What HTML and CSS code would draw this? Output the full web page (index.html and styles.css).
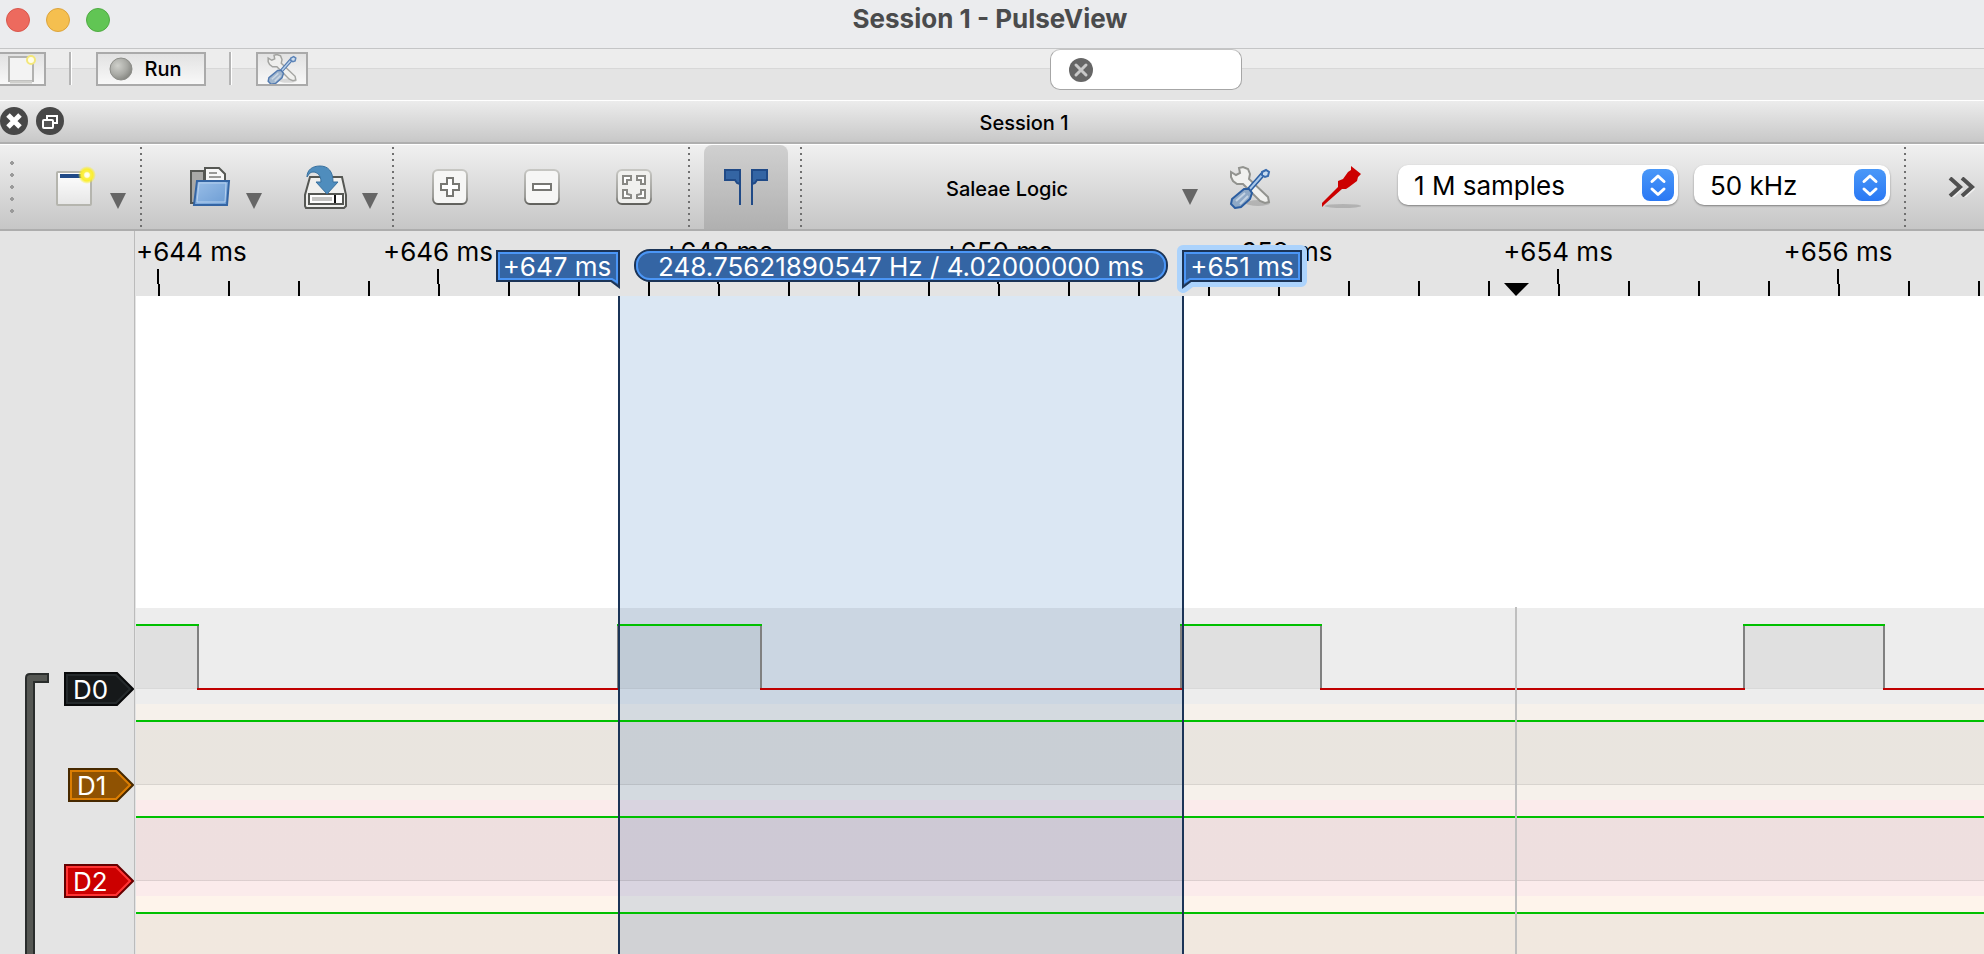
FILE: index.html
```html
<!DOCTYPE html>
<html lang="en">
<head>
<meta charset="utf-8">
<title>Session 1 - PulseView</title>
<link rel="stylesheet" href="styles.css">
</head>
<body>
<svg class="defs" aria-hidden="true">
  <defs>
    <linearGradient id="paper" x1="0" y1="0" x2="0" y2="1"><stop offset="0" stop-color="#fff"/><stop offset="1" stop-color="#e6e6e6"/></linearGradient>
    <linearGradient id="folder" x1="0" y1="0" x2="1" y2="1"><stop offset="0" stop-color="#9bbfe8"/><stop offset="1" stop-color="#6a9bd3"/></linearGradient>
    <linearGradient id="rim" x1="0" y1="0" x2="0" y2="1"><stop offset="0" stop-color="#c6c6c2"/><stop offset="0.8" stop-color="#9a9a96"/><stop offset="1" stop-color="#60605c"/></linearGradient>
    <radialGradient id="ball" cx="0.35" cy="0.35" r="0.7"><stop offset="0" stop-color="#cfd0cb"/><stop offset="0.6" stop-color="#a9aaa5"/><stop offset="1" stop-color="#858681"/></radialGradient>
    <radialGradient id="glow"><stop offset="0" stop-color="#fff"/><stop offset="0.25" stop-color="#fffde0"/><stop offset="0.4" stop-color="#fbf04a"/><stop offset="0.65" stop-color="#fbee30"/><stop offset="1" stop-color="#fbee20" stop-opacity="0"/></radialGradient>
    <symbol id="tools" viewBox="0 0 44 44">
      <ellipse cx="30" cy="38" rx="12" ry="3" fill="#000" opacity="0.15"/>
      <path d="M3 12V7L8 10L12 8L11 3L15 2L20 4L22 9L21 14L40 32L41 37L37 38L32 36L15 19L9 19L5 16Z" fill="#f1f1ef" stroke="#92938f" stroke-width="2"/>
      <path d="M35 9L20 26" stroke="#2b5da0" stroke-width="5"/>
      <path d="M35 9L20 26" stroke="#a9c8ea" stroke-width="2"/>
      <path d="M34 7L38 5L41 7L40 11L37 12L34 10Z" fill="#c9dcf0" stroke="#3a6cae" stroke-width="2"/>
      <path d="M16 24L21 24L24 28L22 34L13 42L7 43L3 39L4 34Z" fill="#8fa9c6" stroke="#2b5da0" stroke-width="2"/>
      <path d="M8 36L17 28M12 39L20 31" stroke="#c3d2e2" stroke-width="2"/>
    </symbol>
    <symbol id="updown" viewBox="0 0 32 32">
      <path d="M10 12.500L16 7L22 12.500M10 20L16 25.500L22 20" fill="none" stroke="#fff" stroke-width="3" stroke-linecap="round" stroke-linejoin="round"/>
    </symbol>
    <symbol id="caret" viewBox="0 0 16 16"><path d="M0 0H16L8 16Z" fill="#666"/></symbol>
  </defs>
</svg>

<header class="titlebar">
  <div class="lights">
    <button class="light close" aria-label="Close"></button>
    <button class="light minimise" aria-label="Minimise"></button>
    <button class="light zoom" aria-label="Zoom"></button>
  </div>
  <h1 class="window-title">Session 1 - PulseView</h1>
</header>

<div class="runbar">
  <button class="push push-new" aria-label="New session">
    <svg width="30" height="30" viewBox="0 0 30 30"><rect x="2" y="3" width="24" height="24" fill="#f3f3f3" stroke="#b2b2b0" stroke-width="2"/><path d="M3 28H25" stroke="#cfcfcc" stroke-width="3"/><circle cx="24" cy="6" r="4" fill="#fffde8" stroke="#f3e77a" stroke-width="2"/></svg>
  </button>
  <span class="bar-line"></span>
  <button class="push push-run">
    <svg width="26" height="26" viewBox="0 0 26 26"><circle cx="13" cy="13" r="11" fill="url(#ball)" stroke="#8d8e89"/></svg>
    Run
  </button>
  <span class="bar-line"></span>
  <button class="push push-tools" aria-label="Settings"><svg width="32" height="32" opacity="0.8"><use href="#tools"/></svg></button>
  <label class="search">
    <svg width="24" height="24" viewBox="0 0 24 24"><circle cx="12" cy="12" r="12" fill="#666"/><path d="M7 7L17 17M17 7L7 17" stroke="#c8c8c8" stroke-width="3" stroke-linecap="round"/></svg>
    <input type="text" aria-label="Search">
  </label>
</div>

<div class="dock-title">
  <button class="dock-button" aria-label="Close session"><svg width="28" height="28" viewBox="0 0 28 28"><circle cx="14" cy="14" r="14" fill="#484848"/><path d="M8 8L20 20M20 8L8 20" stroke="#fff" stroke-width="5"/></svg></button>
  <button class="dock-button" aria-label="Float session"><svg width="28" height="28" viewBox="0 0 28 28"><circle cx="14" cy="14" r="14" fill="#484848"/><path d="M11 12V9H21V16H18" fill="none" stroke="#fff" stroke-width="2"/><rect x="7" y="13" width="10" height="8" rx="1" fill="#555" stroke="#fff" stroke-width="2"/></svg></button>
  <h2 class="dock-name">Session 1</h2>
</div>

<div class="toolbar">
  <span class="grip"></span>
  <button class="tool" aria-label="New view">
    <svg width="44" height="44" viewBox="0 0 44 44"><rect x="5" y="7" width="34" height="33" rx="1" fill="url(#paper)" stroke="#b5b5ae" stroke-width="2"/><rect x="8" y="9" width="28" height="4" fill="#204a87"/><circle cx="35" cy="10" r="9" fill="url(#glow)"/></svg>
    <svg class="caret" width="16" height="16"><use href="#caret"/></svg>
  </button>
  <span class="dots after-menu"></span>
  <button class="tool open" aria-label="Open">
    <svg width="44" height="44" viewBox="0 0 44 44"><path d="M3 6H16V38H3Z" fill="#a9a9a7" stroke="#555753" stroke-width="2"/><path d="M17 3H31L37 9V24H17Z" fill="#f8f8f8" stroke="#555753" stroke-width="2"/><path d="M21 8H29M21 12H33" stroke="#9a9a98" stroke-width="2"/><path d="M9 16H41L39 40H6Z" fill="url(#folder)" stroke="#3465a4" stroke-width="2"/><path d="M11 18H38L37 37H9Z" fill="none" stroke="#b5d0ee"/></svg>
    <svg class="caret" width="16" height="16"><use href="#caret"/></svg>
  </button>
  <button class="tool save" aria-label="Save">
    <svg width="44" height="44" viewBox="0 0 44 44"><path d="M6 12H38L42 30V41L40 43H2L1 41V30Z" fill="#f0f0ee" stroke="#555753" stroke-width="2"/><rect x="5" y="29" width="34" height="10" fill="#fff" stroke="#555753" stroke-width="2"/><path d="M8 34H28" stroke="#c4c4c2" stroke-width="4"/><path d="M31 30V38" stroke="#111" stroke-width="2"/><path d="M3 12C3 5 8 1 16 1C24 1 29 6 29 17H34L23 29L12 17H17C17 10 13 7 9 7C6 7 5 9 3 12Z" fill="#4f8dbd" stroke="#38709e"/></svg>
    <svg class="caret" width="16" height="16"><use href="#caret"/></svg>
  </button>
  <span class="dots after-menu"></span>
  <div class="zooms">
    <button class="tool" aria-label="Zoom in"><svg width="36" height="36" viewBox="0 0 36 36"><rect x="1" y="1" width="34" height="34" rx="5" fill="#f6f6f5" stroke="url(#rim)" stroke-width="2"/><path d="M15 9H21V15H27V21H21V27H15V21H9V15H15Z" fill="#fff" stroke="#777773" stroke-width="2"/></svg></button>
    <button class="tool" aria-label="Zoom out"><svg width="36" height="36" viewBox="0 0 36 36"><rect x="1" y="1" width="34" height="34" rx="5" fill="#f6f6f5" stroke="url(#rim)" stroke-width="2"/><path d="M9 15H27V21H9Z" fill="#fff" stroke="#777773" stroke-width="2"/></svg></button>
    <button class="tool" aria-label="Zoom to fit"><svg width="36" height="36" viewBox="0 0 36 36"><rect x="1" y="1" width="34" height="34" rx="5" fill="#f0f0ee" stroke="url(#rim)" stroke-width="2"/><path d="M7 7H15V11H11V15H7ZM21 7H29V15H25V11H21ZM7 21H11V25L15 26V29H7ZM29 21H25V25L21 26V29H29Z" fill="#fff" stroke="#888884" stroke-width="2"/></svg></button>
  </div>
  <span class="dots"></span>
  <button class="tool cursors" aria-label="Show cursors" aria-pressed="true"><svg width="44" height="36" viewBox="0 0 44 36"><path d="M16 0V36M28 0V36" stroke="#204a87" stroke-width="2"/><path d="M1 1H16V15L13 14L11 11H1ZM43 1H28V15L31 14L33 11H43Z" fill="#3465a4" stroke="#204a87" stroke-width="2"/></svg></button>
  <span class="dots"></span>
  <button class="tool device"><span class="device-name">Saleae Logic</span><svg class="caret" width="16" height="16"><use href="#caret"/></svg></button>
  <button class="tool configure" aria-label="Configure device"><svg width="44" height="44"><use href="#tools"/></svg></button>
  <button class="tool probe" aria-label="Configure channels"><svg width="44" height="44" viewBox="0 0 44 44"><ellipse cx="23" cy="41" rx="18" ry="2" fill="#000" opacity="0.15"/><path d="M2 42V38L18 22V16L23 14L28 7L31 5V1L41 9L38 12L37 16L29 22L26 24H22L5 39Z" fill="#c00"/></svg></button>
  <label class="picker samples"><select aria-label="Sample count"><option>1 M samples</option></select><svg class="picker-arrows" width="32" height="32"><use href="#updown"/></svg></label>
  <label class="picker rate"><select aria-label="Sample rate"><option>50 kHz</option></select><svg class="picker-arrows" width="32" height="32"><use href="#updown"/></svg></label>
  <span class="dots"></span>
  <button class="tool more" aria-label="More"><svg width="28" height="20" viewBox="0 0 28 20"><path d="M2 1L12 10L2 19M14 1L24 10L14 19" fill="none" stroke="#fff" stroke-width="3" transform="translate(1 2)" opacity="0.6"/><path d="M2 1L12 10L2 19M14 1L24 10L14 19" fill="none" stroke="#505050" stroke-width="4"/></svg></button>
</div>

<main class="session">
  <aside class="channels">
    <svg class="bracket" width="24" height="320" viewBox="0 0 24 320"><path d="M1 322V5Q1 1 5 1H23V9H9V322" fill="#555753" stroke="#2a2d2c" stroke-width="2"/></svg>
    <div class="tags">
      <svg width="70" height="34" viewBox="0 0 70 34"><path d="M1 1H53L69 17L53 33H1Z" fill="#16191a" stroke="#08090a" stroke-width="2"/><path d="M3 3H52L66 17L52 31H3Z" fill="none" stroke="#24292b" stroke-width="2"/><text class="tag-text" x="9" y="27">D0</text></svg>
      <svg width="66" height="34" viewBox="0 0 66 34"><path d="M1 1H49L65 17L49 33H1Z" fill="#8f5202" stroke="#472900" stroke-width="2"/><path d="M3 3H48L62 17L48 31H3Z" fill="none" stroke="#db7d03" stroke-width="2"/><text class="tag-text" x="9" y="27">D1</text></svg>
      <svg width="70" height="34" viewBox="0 0 70 34"><path d="M1 1H53L69 17L53 33H1Z" fill="#c00" stroke="#600" stroke-width="2"/><path d="M3 3H52L66 17L52 31H3Z" fill="none" stroke="#ff3434" stroke-width="2"/><text class="tag-text" x="9" y="27">D2</text></svg>
    </div>
  </aside>

  <section class="view">
    <svg class="ruler" width="100%" height="65">
      <path stroke="#000" stroke-width="2" d="M22 38v15M302 38v15M582 38v15M862 38v15M1142 38v15M1422 38v15M1702 38v15M23 53v12M93 50v15M163 50v15M233 50v15M303 53v12M373 50v15M443 50v15M513 50v15M583 53v12M653 50v15M723 50v15M793 50v15M863 53v12M933 50v15M1003 50v15M1073 50v15M1143 53v12M1213 50v15M1283 50v15M1353 50v15M1423 53v12M1493 50v15M1563 50v15M1633 50v15M1703 53v12M1773 50v15M1843 50v15"/>
      <g class="ruler-text">
        <text class="first" x="0" y="30">+644 ms</text>
        <text x="302" y="30">+646 ms</text>
        <text x="582" y="30">+648 ms</text>
        <text x="862" y="30">+650 ms</text>
        <text x="1142" y="30">+652 ms</text>
        <text x="1422" y="30">+654 ms</text>
        <text x="1702" y="30">+656 ms</text>
      </g>
      <path d="M1368 52H1393L1380 65Z"/>
      <path d="M361 20H483V56L475 50H361Z" fill="#3465a4" stroke="#1b3457" stroke-width="2"/>
      <path d="M363 22H481V51L476 48H363Z" fill="none" stroke="#4b96f6" stroke-width="2"/>
      <text class="flag-text" x="421" y="45">+647 ms</text>
      <rect x="499" y="19" width="532" height="31" rx="15" fill="#3465a4" stroke="#1b3457" stroke-width="2"/>
      <rect x="501" y="21" width="528" height="27" rx="13" fill="none" stroke="#4b96f6" stroke-width="2"/>
      <text class="flag-text" x="765" y="45">248.75621890547 Hz / 4.02000000 ms</text>
      <path d="M1047 20H1165V50H1055L1047 56Z" fill="none" stroke="#acd3fc" stroke-width="12" stroke-linejoin="round"/>
      <path d="M1047 20H1165V50H1055L1047 56Z" fill="#3465a4" stroke="#1b3457" stroke-width="2"/>
      <path d="M1049 22H1163V48H1054L1049 51Z" fill="none" stroke="#4b96f6" stroke-width="2"/>
      <text class="flag-text" x="1106" y="45">+651 ms</text>
    </svg>
    <div class="traces">
      <div class="selection"></div>
      <div class="empty"></div>
      <div class="row row-d0"><svg width="100%" height="96">
        <path d="M0 17H62V80H0ZM482 17H625V80H482ZM1045 17H1185V80H1045ZM1608 17H1748V80H1608Z" fill="#000" opacity="0.05"/>
        <path d="M0 80.500H1848" stroke="#000" opacity="0.08"/>
        <path d="M62 17V81M482 17V81M625 17V81M1045 17V81M1185 17V81M1608 17V81M1748 17V81" stroke="#808080" stroke-width="2"/>
        <path d="M0 17H63M481 17H626M1044 17H1186M1607 17H1749" stroke="#00c000" stroke-width="2"/>
        <path d="M61 81H482M624 81H1046M1184 81H1609M1747 81H3000" stroke="#c00000" stroke-width="2"/>
      </svg></div>
      <div class="row row-d1"><div class="high"></div></div>
      <div class="row row-d2"><div class="high"></div></div>
      <div class="row row-d3"><div class="high"></div></div>
      <div class="selection-edges"></div>
      <div class="hover-line"></div>
    </div>
  </section>
</main>
</body>
</html>
```
FILE: styles.css
```css
* { box-sizing: border-box; }

body {
  margin: 0;
  height: 100vh;
  overflow: hidden;
  display: flex;
  flex-direction: column;
  background: #e4e4e4;
  color: #000;
  font-family: Inter, "Liberation Sans", sans-serif;
}

button, input, select { font: inherit; color: inherit; }
button { border: 0; padding: 0; background: none; }
svg { display: block; flex: none; }
.defs { position: absolute; width: 0; height: 0; }

.titlebar {
  display: grid;
  grid-template-columns: 1fr auto 1fr;
  flex: none;
  height: 49px;
  padding: 0 4px 8px 0;
  align-items: center;
  background: #ebecee;
  border-bottom: 1px solid #c4c5c6;
}
.lights { display: flex; gap: 16px; padding-left: 6px; }
.light { width: 24px; height: 24px; border-radius: 50%; border: 1px solid; }
.light.close { background: #ed6a5e; border-color: #d9574c; }
.light.minimise { background: #f5bf4f; border-color: #dca43c; }
.light.zoom { background: #61c554; border-color: #4fab42; }
.window-title { margin: 0; padding-bottom: 2px; font-size: 26px; line-height: 32px; font-weight: 700; color: #4a4b4c; }

.runbar {
  display: flex;
  flex: none;
  height: 51px;
  align-items: flex-start;
  background: linear-gradient(#ededed 19px, #d8d8d8 19px, #d8d8d8 20px, #e4e4e4 20px);
}
.push {
  display: flex;
  align-items: center;
  justify-content: center;
  height: 34px;
  margin-top: 3px;
  border: 2px solid #aaa;
  background: linear-gradient(#e2e2e2, #f8f8f8);
  overflow: hidden;
}
.push-new { width: 46px; border-left: 0; }
.push-run { width: 110px; padding-right: 12px; gap: 10px; font-size: 20px; font-weight: 500; }
.push-tools { width: 52px; }
.bar-line {
  width: 3px;
  height: 33px;
  margin: 3px 24px 0 23px;
  background: linear-gradient(90deg, #b5b5b5 2px, #fff 2px);
}
.search {
  display: flex;
  align-items: center;
  width: 192px;
  height: 41px;
  margin: 0 auto;
  padding: 0 12px 0 18px;
  gap: 8px;
  border: 1px solid #a6a6a6;
  border-top-color: #c4c4c4;
  border-radius: 10px;
  background: #fff;
}
.search input { flex: 1; min-width: 0; border: 0; padding: 0; outline: 0; background: none; font-size: 20px; }

.dock-title {
  display: flex;
  flex: none;
  height: 44px;
  align-items: center;
  gap: 8px;
  padding: 0 8px 2px 0;
  border-top: 1px solid #fff;
  border-bottom: 2px solid #afafaf;
  background: linear-gradient(#ececec, #c8c8c8);
}
.dock-name { flex: 1; margin: 0; padding-top: 4px; font-size: 20px; line-height: 24px; font-weight: 500; text-align: center; }

.toolbar {
  display: flex;
  flex: none;
  height: 87px;
  align-items: center;
  padding-right: 8px;
  border-top: 1px solid #fff;
  border-bottom: 2px solid #adadad;
  background: linear-gradient(#f0f0f0, #c6c6c6);
}
.grip {
  width: 4px;
  height: 60px;
  margin: 0 38px 0 10px;
  background: radial-gradient(circle, #9a9a9a 2px, transparent 2px) 0 0 / 4px 12px;
}
.tool { display: flex; align-items: center; gap: 14px; }
.tool .caret { margin-top: 28px; }
.dots {
  width: 2px;
  height: 80px;
  background: repeating-linear-gradient(#707070 0 2px, transparent 2px 6px);
}
.after-menu { margin-left: 14px; }
.open { margin-left: 46px; }
.save { margin-left: 42px; }
.zooms { display: flex; gap: 56px; margin: 0 36px 0 38px; }
.cursors {
  width: 84px;
  height: 84px;
  margin: 0 12px 0 14px;
  justify-content: center;
  border-radius: 8px 8px 0 0;
  background: linear-gradient(#d0d0d0, #b0b0b0);
}
.device { flex: 1; gap: 0; padding-left: 30px; }
.device .caret { margin-top: 20px; }
.device-name { flex: 1; padding-top: 4px; font-size: 20px; line-height: 24px; font-weight: 500; }
.configure { margin-left: 30px; }
.probe { margin-left: 48px; }
.picker { position: relative; margin-bottom: 4px; }
.picker select {
  width: 100%;
  height: 40px;
  padding: 0 48px 0 16px;
  border: 0;
  border-radius: 10px;
  appearance: none;
  background: #fff;
  box-shadow: 0 1px 2px rgba(0, 0, 0, 0.4);
  font-size: 26px;
}
.picker-arrows {
  position: absolute;
  top: 4px;
  right: 4px;
  border-radius: 8px;
  background: linear-gradient(#4a98f8, #2a78f4);
  pointer-events: none;
}
.samples { width: 280px; margin-left: 34px; }
.rate { width: 196px; margin-left: 16px; margin-right: 14px; }
.more { margin-left: 42px; }

.session { display: flex; flex: 1; min-height: 0; }
.channels {
  display: flex;
  flex: none;
  width: 135px;
  justify-content: space-between;
  padding-left: 25px;
  border-right: 1px solid #bbb;
}
.bracket { margin-top: 442px; }
.tags { display: flex; flex-direction: column; align-items: flex-end; gap: 62px; padding-top: 441px; }
.tag-text { fill: #fff; font-size: 26px; }

.view { display: flex; flex: 1; flex-direction: column; min-width: 0; margin-left: 1px; }
.ruler { overflow: hidden; }
.ruler-text { font-size: 26px; text-anchor: middle; }
.ruler-text .first { text-anchor: start; }
.flag-text { fill: #fff; font-size: 26px; text-anchor: middle; }

.traces { position: relative; flex: 1; min-height: 0; overflow: hidden; background: #fff; }
.empty { height: 312px; }
.row { position: relative; height: 96px; }
.row-d0 { background: rgba(22, 25, 26, 0.08); }
.row-d1 { background: rgba(143, 82, 2, 0.08); }
.row-d2 { background: rgba(204, 0, 0, 0.08); }
.row-d3 { background: rgba(245, 121, 0, 0.08); }
.high {
  height: 96px;
  background: linear-gradient(
    transparent 16px,
    #00c000 16px, #00c000 18px,
    rgba(0, 0, 0, 0.05) 18px, rgba(0, 0, 0, 0.05) 80px,
    rgba(0, 0, 0, 0.12) 80px, rgba(0, 0, 0, 0.12) 81px,
    transparent 81px);
}
.selection, .selection-edges {
  position: absolute;
  top: 0;
  bottom: 0;
  left: 482px;
  width: 566px;
}
.selection { background: #dbe7f3; }
.selection-edges { border: solid #1b3457; border-width: 0 2px; }
.hover-line {
  position: absolute;
  top: 311px;
  bottom: 0;
  left: 1379px;
  width: 2px;
  background: #bfbfbf;
}
```
